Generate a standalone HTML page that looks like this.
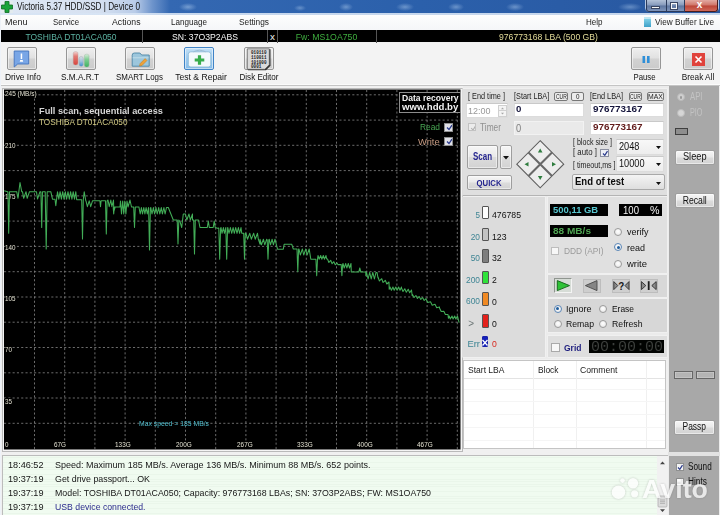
<!DOCTYPE html>
<html><head><meta charset="utf-8"><title>Victoria 5.37 HDD/SSD | Device 0</title>
<style>
*{box-sizing:border-box;margin:0;padding:0}
html,body{width:720px;height:515px;overflow:hidden;background:#f0f0f0}
body{position:relative;font-family:"Liberation Sans",sans-serif;font-size:9.5px;color:#1a1a1a}
.a{position:absolute;white-space:nowrap}
.t{position:absolute;white-space:nowrap;line-height:12px;height:12px}
/* title */
#title{left:0;top:0;width:720px;height:15px;background:
radial-gradient(ellipse 9px 4px at 188px 7px,rgba(170,200,235,.55),transparent),
radial-gradient(ellipse 6px 3px at 300px 8px,rgba(170,200,235,.45),transparent),
radial-gradient(ellipse 7px 4px at 346px 7px,rgba(170,200,235,.5),transparent),
radial-gradient(ellipse 9px 4px at 405px 7px,rgba(170,200,235,.5),transparent),
radial-gradient(ellipse 8px 4px at 456px 7px,rgba(170,200,235,.5),transparent),
radial-gradient(ellipse 9px 4px at 515px 7px,rgba(170,200,235,.5),transparent),
radial-gradient(ellipse 12px 4px at 630px 7px,rgba(170,200,235,.45),transparent),
linear-gradient(rgba(255,255,255,0) 0,rgba(255,255,255,0) 13px,rgba(215,228,244,.9) 13.5px,rgba(215,228,244,.9) 15px),
linear-gradient(90deg,#dfe8f5 0px,#d5e0f0 100px,#b9cce8 135px,#6f95cc 152px,#3468b2 170px,#2b60ab 420px,#2a5ca6 560px,#28579f 720px);}
#menu{left:0;top:15px;width:720px;height:15.500px;background:linear-gradient(#fdfdfd,#f4f5f8)}
#info{left:0;top:30.300px;width:720px;height:12.200px;background:#000}
#tool{left:0;top:43px;width:720px;height:42.500px;background:#f3f3f3;border-bottom:1px solid #c4c4c4;box-shadow:inset 0 -1px 0 #fafafa}
.tb{position:absolute;top:47px;height:23px;width:30px;border:1px solid #969696;border-radius:2px;background:linear-gradient(#efefef,#e1e1e1 48%,#d2d2d2 52%,#cbcbcb);box-shadow:inset 0 0 0 0.600px #fafafa}
.tl{position:absolute;top:71px;height:12px;line-height:12px;font-size:9.8px;text-align:center;white-space:nowrap;color:#111}
.m{font-size:9.7px;color:#1c1c1c}
.i{font-size:9.8px;line-height:13px;height:13px}
.g{font-size:7.4px;line-height:8px;height:8px;margin-top:1.2px;color:#e4e2d2;background:#000;z-index:1}
.cb{position:absolute;width:9px;height:9px;background:#f4f4f4;border:0.5px solid #8e8f8f;overflow:hidden}
.cb svg{position:absolute;left:-0.5px;top:-0.5px}

.pn{position:absolute;background:#dfdfdf;box-shadow:0 0 0 0.6px #f3f3f3}
.in{position:absolute;background:#fff;border:1px solid #dcdcdc;border-top-color:#c9c9c9}
.bt{position:absolute;border:1px solid #9e9e9e;border-radius:2px;background:linear-gradient(#f6f6f6,#e9e9e9 48%,#dcdcdc 52%,#d2d2d2);box-shadow:inset 0 0 0 0.5px #fff}
.sb{position:absolute;border:0.8px solid #777;border-radius:2px;background:#ececec}
.rd{position:absolute;width:8px;height:8px;border-radius:50%;border:0.8px solid #9a9a9a;background:radial-gradient(circle at 50% 40%,#fff,#e4e4e4)}
.rd.on::after{content:"";position:absolute;left:1.7px;top:1.7px;width:3px;height:3px;border-radius:50%;background:#1e5c9c}
.lb{font-size:8.2px;color:#222}
.lg{position:absolute;width:7.5px;height:13.5px;border:1px solid #555;border-radius:1px}
.lt{font-size:9.8px;color:#3f8594;text-align:right;width:20px}
.lc{font-size:9.3px;color:#111}
.r12{font-size:9.8px;color:#111}
.lgx{font-size:9.800px;color:#161616}
</style></head><body>
<div id="title" class="a"></div>
<div id="menu" class="a"></div>
<div id="info" class="a"></div>
<div id="tool" class="a"></div>

<!-- title content -->
<svg class="a" style="left:1px;top:1px" width="12" height="12" viewBox="0 0 12 12"><rect x="0" y="0" width="12" height="12" fill="#e8f0e8" opacity="0.5"/><path d="M4 0.5h4v3.5h3.5v4h-3.5v3.5h-4v-3.5h-3.5v-4h3.5z" fill="#19a43a" stroke="#0c6a22" stroke-width="0.8"/></svg>
<div class="t" id="ttl" style="transform:scaleX(0.819);transform-origin:0 0;left:17px;top:1px;font-size:10px;color:#111">Victoria 5.37 HDD/SSD | Device 0</div>
<!-- window buttons -->
<div class="a" style="left:644.500px;top:-1px;width:74.500px;height:13px;border:1px solid rgba(225,235,248,.75);border-radius:0 0 4px 4px"></div>
<div class="a" style="left:645.500px;top:0;width:21.500px;height:11.500px;border:0.800px solid #2b3b5c;border-top:none;border-radius:0 0 0 3px;background:linear-gradient(#b3c1d7,#8599bb 48%,#5d759f 52%,#7e94ba)"></div>
<div class="a" style="left:667px;top:0;width:18px;height:11.500px;border:0.800px solid #2b3b5c;border-top:none;border-left:none;background:linear-gradient(#b3c1d7,#8599bb 48%,#5d759f 52%,#7e94ba)"></div>
<div class="a" style="left:685px;top:0;width:33px;height:11.500px;border:0.800px solid #4a1d1d;border-top:none;border-left:none;border-radius:0 0 3px 0;background:linear-gradient(#e2aaa2,#cf7468 48%,#bb4436 52%,#d0695a)"></div>
<div class="a" style="left:651px;top:6px;width:9px;height:2.600px;background:#f6f6f6;border:0.500px solid #3b4662"></div>
<div class="a" style="left:670.500px;top:3px;width:6.500px;height:6px;border:1.400px solid #f6f6f6;outline:0.500px solid #3b4662"></div>
<div class="t" style="left:696.800px;top:-1.300px;font-size:10px;font-weight:bold;color:#fff">x</div>
<!-- menu -->
<div class="t m" style="transform:scaleX(0.928);transform-origin:0 0;left:4.800px;top:16px">Menu</div>
<div class="t m" style="transform:scaleX(0.805);transform-origin:0 0;left:53px;top:16px">Service</div>
<div class="t m" style="transform:scaleX(0.897);transform-origin:0 0;left:112px;top:16px">Actions</div>
<div class="t m" style="transform:scaleX(0.835);transform-origin:0 0;left:171px;top:16px">Language</div>
<div class="t m" style="transform:scaleX(0.857);transform-origin:0 0;left:239px;top:16px">Settings</div>
<div class="t m" style="transform:scaleX(0.828);transform-origin:0 0;left:586px;top:16px">Help</div>
<div class="a" style="left:644px;top:17px;width:7px;height:10px;background:linear-gradient(#7fd0e8,#3ea0c8);border-top:2px solid #bfe8f4"></div>
<div class="t m" style="transform:scaleX(0.847);transform-origin:0 0;left:655px;top:16px">View Buffer Live</div>
<!-- info bar -->
<div class="t i" style="transform:scaleX(0.863);transform-origin:50% 0;left:0;top:30px;width:142px;text-align:center;color:#5cb3a3">TOSHIBA DT01ACA050</div>
<div class="a" style="left:142px;top:30px;width:1px;height:13px;background:#555"></div>
<div class="t i" style="transform:scaleX(0.885);transform-origin:50% 0;left:143px;top:30px;width:124px;text-align:center;color:#f4f4f4">SN: 37O3P2ABS</div>
<div class="a" style="left:267px;top:30px;width:1px;height:13px;background:#555"></div>
<div class="t i" style="left:268px;top:30px;width:9px;text-align:center;color:#f4f4f4">x</div>
<div class="a" style="left:277px;top:30px;width:1px;height:13px;background:#555"></div>
<div class="t i" style="transform:scaleX(0.889);transform-origin:50% 0;left:278px;top:30px;width:97px;text-align:center;color:#3fae3f">Fw: MS1OA750</div>
<div class="a" style="left:376px;top:30px;width:1px;height:13px;background:#555"></div>
<div class="t i" style="transform:scaleX(0.882);transform-origin:50% 0;left:377px;top:30px;width:343px;text-align:center;color:#e3dc9a">976773168 LBA (500 GB)</div>

<!-- toolbar -->
<div class="tb" style="left:7px"></div>
<div class="tb" style="left:66px"></div>
<div class="tb" style="left:125px"></div>
<div class="tb" style="left:184px;border-color:#3f83c6;background:linear-gradient(#c3e0f6,#9ccbf0 50%,#86bdea)"></div>
<div class="tb" style="left:244px"></div>
<div class="tb" style="left:631px"></div>
<div class="tb" style="left:683px"></div>
<svg class="a" style="left:0;top:43px" width="720" height="43" viewBox="0 43 720 43">
 <!-- drive info -->
 <path d="M14.200 51h14.500v13h-11l-3.500 3z" fill="#79a6e6" stroke="#4474bd" stroke-width="0.900"/>
 <rect x="20.700" y="53.500" width="1.500" height="5.500" fill="#fff"/><path d="M20.200 60h2.500l0.500 1.800h-3.500z" fill="#fff"/>
 <!-- smart -->
 <defs><linearGradient id="gr" x1="0" y1="0" x2="0" y2="1"><stop offset="0" stop-color="#f3d4d2"/><stop offset="0.350" stop-color="#e27a74"/><stop offset="1" stop-color="#d8453e"/></linearGradient>
 <linearGradient id="gb" x1="0" y1="0" x2="0" y2="1"><stop offset="0" stop-color="#d9dde2"/><stop offset="0.500" stop-color="#9fc0dc"/><stop offset="1" stop-color="#3f8fd0"/></linearGradient>
 <linearGradient id="gg" x1="0" y1="0" x2="0" y2="1"><stop offset="0" stop-color="#d6ecd9"/><stop offset="0.400" stop-color="#7fcf93"/><stop offset="1" stop-color="#3fb160"/></linearGradient></defs>
 <rect x="73.200" y="51.600" width="4.800" height="13.400" rx="2" fill="url(#gr)" stroke="#b9a3a3" stroke-width="0.400"/><rect x="79.200" y="56.500" width="4" height="9.800" rx="1.800" fill="url(#gb)" stroke="#9aa5b0" stroke-width="0.400"/><rect x="84.300" y="54.200" width="4.800" height="12.800" rx="2" fill="url(#gg)" stroke="#9db5a2" stroke-width="0.400"/>
 <!-- smart logs -->
 <path d="M132.200 55.200q0-2.200 2.200-2.200h5.500l1.800 2h7.500v11.200h-17z" fill="#9cc6dc" stroke="#4d86a6" stroke-width="0.900"/><path d="M132.600 57.800h16" stroke="#c9e2ee" stroke-width="0.800"/>
 <path d="M139.500 66l0.600-2.400 5-5 1.900 1.900-5 5z" fill="#eda23a" stroke="#c07a1c" stroke-width="0.500"/>
 <!-- test & repair -->
 <rect x="188.300" y="51.800" width="22.500" height="15.200" rx="2.500" fill="#f3f9fc" stroke="#8fbbd8" stroke-width="0.900"/>
 <path d="M193.500 51.800q6-3.200 12 0" fill="none" stroke="#9bbdd4" stroke-width="1"/>
 <path d="M197.900 55.200h3.200v3.200h3.200v3.200h-3.200v3.200h-3.200v-3.200h-3.200v-3.200h3.200z" fill="#37ad4c"/>
 <!-- disk editor -->
 <path d="M248 49.300h22.500v16.500l-4.500 4.500h-18z" fill="#303030"/>
 <path d="M247.300 48.800h22v16l-4.500 4.500h-17.500z" fill="#dadada" stroke="#555" stroke-width="0.700"/>
 <g font-family="Liberation Mono,monospace" font-size="5.200" fill="#1a1a1a" font-weight="bold"><text x="251" y="54.200" textLength="15.500" lengthAdjust="spacingAndGlyphs">010110</text><text x="251" y="58.900" textLength="15.500" lengthAdjust="spacingAndGlyphs">110011</text><text x="251" y="63.600" textLength="15.500" lengthAdjust="spacingAndGlyphs">101000</text><text x="251" y="68.200" textLength="10.300" lengthAdjust="spacingAndGlyphs">0001</text></g>
 <!-- pause -->
 <rect x="642.500" y="56" width="2.600" height="7" fill="#2f8fd8"/><rect x="647" y="56" width="2.600" height="7" fill="#2f8fd8"/>
 <!-- break all -->
 <rect x="692" y="53" width="13" height="13" fill="#e0433c"/>
 <path d="M695.500 56.500l6 6m0-6l-6 6" stroke="#fff" stroke-width="1.600" fill="none"/>
</svg>
<div class="tl" style="transform:scaleX(0.858);transform-origin:50% 0;left:2px;width:41px">Drive Info</div>
<div class="tl" style="transform:scaleX(0.841);transform-origin:50% 0;left:55px;width:50px">S.M.A.R.T</div>
<div class="tl" style="transform:scaleX(0.812);transform-origin:50% 0;left:109px;width:61px">SMART Logs</div>
<div class="tl" style="transform:scaleX(0.876);transform-origin:50% 0;left:171px;width:60px">Test &amp; Repair</div>
<div class="tl" style="transform:scaleX(0.823);transform-origin:50% 0;left:234px;width:50px">Disk Editor</div>
<div class="tl" style="transform:scaleX(0.792);transform-origin:50% 0;left:624px;width:41px">Pause</div>
<div class="tl" style="transform:scaleX(0.840);transform-origin:50% 0;left:673px;width:50px">Break All</div>
<div class="a" style="left:0;top:15px;width:1px;height:500px;background:#eef2f8"></div>
<!-- graph -->
<div class="a" style="left:1.500px;top:87.500px;width:461px;height:364.500px;background:#f4f4f4;border:1px solid #b9b9b9"></div>
<svg class="a" style="left:0;top:0;z-index:0" width="720" height="515" viewBox="0 0 720 515">
<rect x="4" y="89.5" width="456.5" height="360" fill="#000"/>
<g stroke="#7e7e7e" stroke-width="0.85" stroke-dasharray="2.1 2.2" fill="none"><line x1="34.5" y1="90" x2="34.5" y2="449.5"/><line x1="64.7" y1="90" x2="64.7" y2="449.5"/><line x1="94.9" y1="90" x2="94.9" y2="449.5"/><line x1="125.1" y1="90" x2="125.1" y2="449.5"/><line x1="155.3" y1="90" x2="155.3" y2="449.5"/><line x1="185.5" y1="90" x2="185.5" y2="449.5"/><line x1="215.7" y1="90" x2="215.7" y2="449.5"/><line x1="245.9" y1="90" x2="245.9" y2="449.5"/><line x1="276.1" y1="90" x2="276.1" y2="449.5"/><line x1="306.3" y1="90" x2="306.3" y2="449.5"/><line x1="336.5" y1="90" x2="336.5" y2="449.5"/><line x1="366.7" y1="90" x2="366.7" y2="449.5"/><line x1="396.9" y1="90" x2="396.9" y2="449.5"/><line x1="427.1" y1="90" x2="427.1" y2="449.5"/><line x1="457.3" y1="90" x2="457.3" y2="449.5"/><line x1="4" y1="94.8" x2="460.5" y2="94.8"/><line x1="4" y1="120.1" x2="460.5" y2="120.1"/><line x1="4" y1="145.3" x2="460.5" y2="145.3"/><line x1="4" y1="170.6" x2="460.5" y2="170.6"/><line x1="4" y1="195.9" x2="460.5" y2="195.9"/><line x1="4" y1="221.1" x2="460.5" y2="221.1"/><line x1="4" y1="246.4" x2="460.5" y2="246.4"/><line x1="4" y1="271.7" x2="460.5" y2="271.7"/><line x1="4" y1="297.0" x2="460.5" y2="297.0"/><line x1="4" y1="322.2" x2="460.5" y2="322.2"/><line x1="4" y1="347.5" x2="460.5" y2="347.5"/><line x1="4" y1="372.8" x2="460.5" y2="372.8"/><line x1="4" y1="398.0" x2="460.5" y2="398.0"/><line x1="4" y1="423.3" x2="460.5" y2="423.3"/></g>
</svg>
<svg class="a" style="left:0;top:0;z-index:2;pointer-events:none" width="720" height="515" viewBox="0 0 720 515">
<polyline points="4.2,190.8 7.5,191.7 7.9,191.7 8.7,233.3 9.5,191.7 10.3,191.7 16.7,191.7 18,198.3 20,182.5 21.7,191.7 22.5,191.7 23.7,198.3 26.0,191.7 27.2,198.3 29.5,191.7 29.5,191.7 36.5,191.7 36.5,191.7 37.5,199.0 40,191.7 40.9,191.7 41.7,227.5 42.5,191.7 44,191.7 45.2,191.7 46.2,249 47.2,191.7 48.3,191.7 50.8,191.7 52.5,199.2 55,199.2 55.8,205.8 57.5,191.7 57.5,191.7 58.8,199.2 60.1,191.7 61.4,199.2 62.7,191.7 64.0,199.2 65.3,191.7 66.6,199.2 68.0,191.7 69.3,199.2 70.6,191.7 71.9,199.2 73.2,191.7 74.5,199.2 75.8,191.7 76.7,199.7 81.7,199.7 81.7,199.7 82.5,239 83.3,199.7 84.2,191.7 85.8,200.8 86.0,200.8 87.4,206.7 89.2,200.8 90.7,206.7 92.5,200.8 92.5,200.8 99.8,200.8 99.9,200.8 100.5,206.7 101.1,200.8 101.3,200.8 105.3,200.8 105.5,200.8 106.3,234 107.1,200.8 108.0,200.0 109.2,206.7 110.8,200.0 111.9,206.7 113.5,200 113.8,211.7 115,207.5 113.2,207.5 113.7,214 114.2,207.5 114.5,207 120,207 120.5,201.0 121.5,214.0 122.7,201.0 123.7,214.0 124.8,201.0 125.9,214.0 127,201 128,207 130,200 131.5,207 133.7,207 134.5,227.5 135.3,207 135.8,207 139,207 139.0,207.5 140.2,214.0 141.4,207.5 142.5,214.0 143.8,207.5 144.9,214.0 146.1,207.5 147.3,214.0 148.5,207.5 148.6,208 149.5,250 150.4,208 150.8,207.5 152.0,214.0 153.4,207.5 154.6,214.0 156.0,207.5 157.2,214.0 158.7,207.5 159.8,214.0 161.3,207.5 162.4,214.0 163.9,207.5 165.1,214.0 166.5,207.5 168.3,207.5 173.3,220 173.3,220 176.8,220 177.2,220 178,244 178.8,220 180,221.5 181.7,227.5 183.3,214 185.5,214.0 186.8,220.0 189.0,214.0 190.3,220.0 192.5,214 192.5,220 193.5,220 193.7,220 194.5,254 195.3,220 195.8,220 198.5,220 200,227.5 200,227.5 207.3,227.5 208.3,221 209.3,227.5 209.3,227.5 213.2,227.5 214.2,221 215.2,227.5 217.5,228.3 218.8,228 219.7,259.2 220.6,228 221.0,227.5 222.0,233.3 223.4,227.5 224.4,233.3 225.8,227.5 225.8,228 226.7,259.2 227.6,228 227.8,227.5 229.0,233.3 230.4,227.5 231.7,233.3 233.1,227.5 234.3,233.3 235.7,227.5 237.0,233.3 238.4,227.5 239.6,233.3 241,227.5 241.7,233.3 243.5,233.3 243.7,233.3 244.5,259.2 245.3,233.3 246.0,233.3 247.5,239.2 249.8,233.3 251.3,239.2 253.7,233.3 255.2,239.2 257.5,233.3 258.3,239.2 260,244.2 260.0,239.2 261.4,244.8 263.4,239.2 264.8,244.8 266.7,239.2 267.2,240 268,259.2 268.8,240 269.2,239.2 270.5,244.8 272.1,239.2 273.4,244.8 275,239.2 277.5,249.2 277.5,249.2 283.3,249.2 284.2,244.2 284.2,244.2 291.7,244.2 293.3,249 293.3,249 296.7,249 297.0,249 297.8,271.7 298.6,249 299.0,249.0 300.3,255.0 302.4,249.0 303.7,255.0 305.8,249.0 307.1,255.0 309.2,249 310.8,259.2 310.8,259.2 315.5,259.2 315.9,259.2 316.7,275.8 317.5,259.2 318.0,255.5 319.1,259.2 320.7,255.5 321.8,259.2 323.3,255.5 324.4,259.2 326,255.5 326.7,259 327.5,259.0 328.9,262.5 330.7,260.3 332.1,263.7 333.8,261.7 335.3,264.8 337,263 337.9,264.6 341,264.6 341.2,264.6 341.9,275.8 342.6,264.6 343.0,263.5 344.2,268.0 345.7,263.5 346.8,268.0 348.3,263.5 349.5,268.0 351,263.5 351.3,272 351.3,272 358.8,272 359.8,268 360.8,272 360.8,272 365.8,272 365.8,275.8 366.5,272.4 368.1,279.0 369.7,272.4 371.2,279.0 372.8,272.4 374.4,279.0 376,272.4 377,272.4 378,278 378.0,277.0 379.4,281.0 381.7,278.7 383.1,282.5 385.3,280.3 386.8,284.0 389,282 389.2,289.2 390.0,287.0 391.4,290.3 392.9,287.0 394.2,290.3 395.8,287.0 397.1,290.3 398.6,287.0 400.0,290.3 401.5,287 401.5,288.0 403.0,291.5 404.8,288.7 406.3,292.2 408.2,289.3 409.7,292.8 411.5,290 412.2,295.8 412.5,294.5 414.1,297.5 415.9,295.5 417.4,298.5 419.2,296.5 420.8,299.5 422.6,297.5 424.2,300.5 426,298.5 426.0,299.0 427.7,302.5 430.5,301.7 432.2,305.2 435.0,304.3 436.7,307.8 439.5,307 439.5,308.0 441.2,311.5 443.8,311.2 445.4,314.5 448,314.5 448.4,318.2 449.2,316.0 450.3,319.0 452.0,316.0 453.1,319.0 454.7,316.0 455.8,319.0 457.5,316 459.1,322.6" fill="none" stroke="#42ad57" stroke-width="1.05" stroke-linejoin="round"/>
</svg>

<!-- graph labels -->
<div class="t g" style="transform:scaleX(0.874);transform-origin:0 0;left:4.5px;top:89.3px">245 (MB/s)</div>
<div class="t g" style="transform:scaleX(0.851);transform-origin:0 0;left:4.5px;top:140.5px">210</div>
<div class="t g" style="transform:scaleX(0.851);transform-origin:0 0;left:4.5px;top:191.7px">175</div>
<div class="t g" style="transform:scaleX(0.851);transform-origin:0 0;left:4.5px;top:242.9px">140</div>
<div class="t g" style="transform:scaleX(0.851);transform-origin:0 0;left:4.5px;top:294.1px">105</div>
<div class="t g" style="transform:scaleX(0.850);transform-origin:0 0;left:4.5px;top:345.3px">70</div>
<div class="t g" style="transform:scaleX(0.850);transform-origin:0 0;left:4.5px;top:396.5px">35</div>
<div class="t g" style="transform:scaleX(0.848);transform-origin:0 0;left:4.5px;top:440px">0</div>
<div class="t g" style="transform:scaleX(0.858);transform-origin:0 0;left:54px;top:440px">67G</div>
<div class="t g" style="transform:scaleX(0.868);transform-origin:0 0;left:115px;top:440px">133G</div>
<div class="t g" style="transform:scaleX(0.868);transform-origin:0 0;left:176px;top:440px">200G</div>
<div class="t g" style="transform:scaleX(0.868);transform-origin:0 0;left:236.7px;top:440px">267G</div>
<div class="t g" style="transform:scaleX(0.868);transform-origin:0 0;left:296.7px;top:440px">333G</div>
<div class="t g" style="transform:scaleX(0.868);transform-origin:0 0;left:356.7px;top:440px">400G</div>
<div class="t g" style="transform:scaleX(0.868);transform-origin:0 0;left:416.7px;top:440px">467G</div>
<div class="t" style="transform:scaleX(0.970);transform-origin:0 0;left:39.4px;top:104.5px;font-size:9.5px;font-weight:bold;color:#d6d6d6">Full scan, sequential access</div>
<div class="t" style="transform:scaleX(0.865);transform-origin:0 0;left:39.4px;top:116px;font-size:9.5px;color:#d3cb86">TOSHIBA DT01ACA050</div>
<div class="t" style="transform:scaleX(0.975);transform-origin:0 0;left:139.3px;top:419.3px;font-size:7px;line-height:10px;height:10px;color:#4fbccc">Max speed = 185 MB/s</div>
<div class="a" style="left:399px;top:91.5px;width:61.5px;height:21.5px;border:1px solid #8c8c8c;background:#000"></div>
<div class="t" style="transform:scaleX(0.900);transform-origin:0 0;left:401.7px;top:91.8px;font-size:9.5px;line-height:11px;height:11px;font-weight:bold;color:#f2f2f2">Data recovery</div>
<div class="t" style="transform:scaleX(1.013);transform-origin:0 0;left:401.7px;top:101.2px;font-size:9.5px;line-height:11px;height:11px;font-weight:bold;color:#f2f2f2">www.hdd.by</div>
<div class="t" style="transform:scaleX(0.880);transform-origin:0 0;left:420px;top:121.3px;font-size:9.5px;color:#48a653">Read</div>
<div class="t" style="transform:scaleX(0.986);transform-origin:0 0;left:418.3px;top:135.7px;font-size:9.5px;color:#c59a82">Write</div>
<div class="cb" style="left:444px;top:122.7px;background:#dfe0e6"><svg width="9" height="9" viewBox="0 0 9 9"><path d="M2 4.500l2 2 3-4.500" fill="none" stroke="#2a3a8c" stroke-width="1.300"/></svg></div>
<div class="cb" style="left:444px;top:136.700px;background:#dfe0e6"><svg width="9" height="9" viewBox="0 0 9 9"><path d="M2 4.500l2 2 3-4.500" fill="none" stroke="#2a3a8c" stroke-width="1.300"/></svg></div>

<!-- right control area -->
<div class="a" style="left:462.500px;top:86px;width:207px;height:273px;background:#ebebeb"></div>
<div class="pn" style="left:462.500px;top:89px;width:204px;height:105.500px"></div>
<div class="a" style="left:462.500px;top:195.200px;width:204px;height:1px;background:#b4b4b4"></div>
<div class="pn" style="left:462.500px;top:197px;width:82.800px;height:159.800px;background:#dcdcdc"></div>
<div class="pn" style="left:548px;top:197px;width:118.500px;height:76px;background:#e0e0e0"></div>
<div class="pn" style="left:548px;top:275px;width:118.500px;height:21.500px;background:#d8d8d8"></div>
<div class="pn" style="left:548px;top:299px;width:118.500px;height:33px;background:#d7d7d7"></div>
<div class="pn" style="left:548px;top:335.500px;width:118.500px;height:21.500px;background:#dedede"></div>
<!-- top panel content -->
<div class="t lb" style="transform:scaleX(0.893);transform-origin:0 0;left:468px;top:90.600px">[ End time ]</div>
<div class="t lb" style="transform:scaleX(0.889);transform-origin:0 0;left:513.800px;top:90.600px">[Start LBA]</div>
<div class="t lb" style="transform:scaleX(0.895);transform-origin:0 0;left:589.700px;top:90.600px">[End LBA]</div>
<div class="sb" style="left:554px;top:92px;width:13.500px;height:8.500px"></div><div class="t" style="transform:scaleX(0.733);transform-origin:0 0;left:555.500px;top:91px;font-size:6.800px;color:#222">CUR</div>
<div class="sb" style="left:570.500px;top:92px;width:13px;height:8.500px"></div><div class="t" style="transform:scaleX(0.896);transform-origin:0 0;left:575.500px;top:91px;font-size:7px;color:#222">0</div>
<div class="sb" style="left:628.500px;top:92px;width:13.500px;height:8.500px"></div><div class="t" style="transform:scaleX(0.733);transform-origin:0 0;left:630px;top:91px;font-size:6.800px;color:#222">CUR</div>
<div class="sb" style="left:646.500px;top:92px;width:17.500px;height:8.500px"></div><div class="t" style="transform:scaleX(1.004);transform-origin:0 0;left:648px;top:91px;font-size:6.800px;color:#222">MAX</div>
<div class="in" style="left:466.300px;top:103px;width:41.500px;height:15px"></div>
<div class="t" style="transform:scaleX(0.937);transform-origin:0 0;left:468px;top:105px;font-size:9.600px;color:#989898">12:00</div>
<div class="a" style="left:497.500px;top:104.500px;width:9px;height:12px;border:0.6px solid #d0d0d0;background:#f4f4f4"></div>
<div class="a" style="left:497.500px;top:110.300px;width:9px;height:0.600px;background:#d0d0d0"></div>
<svg class="a" style="left:497.500px;top:104.500px" width="9" height="12" viewBox="0 0 9 12"><path d="M3 4.200l1.500-1.800 1.500 1.800zM3 7.800l1.500 1.800 1.500-1.800z" fill="#a8a8a8"/></svg>
<div class="in" style="left:513.800px;top:102.700px;width:70.500px;height:14.800px"></div>
<div class="t" style="transform:scaleX(0.990);transform-origin:0 0;left:516px;top:103.300px;font-size:9.800px;font-weight:bold;color:#15153c">0</div>
<div class="in" style="left:590.300px;top:102.700px;width:74.200px;height:14.800px"></div>
<div class="t" style="transform:scaleX(1.011);transform-origin:0 0;left:592.600px;top:103.300px;font-size:9.800px;font-weight:bold;color:#15153c">976773167</div>
<div class="cb" style="left:468px;top:123.300px;width:8px;height:8px;background:#ececec;border-color:#c2c2c2"><svg width="9" height="9" viewBox="0 0 9 9"><path d="M2.200 4l1.800 2 2.700-4.200" fill="none" stroke="#b0b0b0" stroke-width="1.100"/></svg></div>
<div class="t" style="transform:scaleX(0.834);transform-origin:0 0;left:480px;top:121.500px;font-size:10px;color:#8f8f8f">Timer</div>
<div class="in" style="left:514px;top:121px;width:70px;height:14px;background:#eaeaea;border-color:#f2f2f2"></div>
<div class="t" style="transform:scaleX(0.890);transform-origin:0 0;left:516px;top:122px;font-size:10.500px;color:#7f7f7f">0</div>
<div class="in" style="left:590.300px;top:120.700px;width:74.200px;height:14.400px"></div>
<div class="t" style="transform:scaleX(1.011);transform-origin:0 0;left:592.600px;top:120.900px;font-size:9.800px;font-weight:bold;color:#611a1a">976773167</div>
<!-- scan buttons -->
<div class="bt" style="left:467.400px;top:144.600px;width:31px;height:24.500px"></div>
<div class="t" style="transform:scaleX(0.795);transform-origin:50% 0;left:467.400px;top:150.800px;width:31px;text-align:center;font-size:10px;font-weight:bold;color:#26268f">Scan</div>
<div class="bt" style="left:500px;top:144.600px;width:11.600px;height:24.500px"></div>
<svg class="a" style="left:502.800px;top:155.500px" width="6" height="4" viewBox="0 0 6 4"><path d="M0 0h6l-3 3.600z" fill="#111"/></svg>
<div class="bt" style="left:467.400px;top:174.700px;width:44.200px;height:15.500px"></div>
<div class="t" style="transform:scaleX(0.882);transform-origin:50% 0;left:467.400px;top:176.500px;width:44.200px;text-align:center;font-size:8.800px;font-weight:bold;color:#26268f">QUICK</div>
<!-- diamond -->
<svg class="a" style="left:514px;top:138px" width="54" height="54" viewBox="514 138 54 54">
<path d="M540.200 140.700L563.700 164.200 540.200 187.800 516.800 164.200z" fill="#ededed" stroke="#5e5e5e" stroke-width="1.100"/>
<path d="M528.500 152.500L552 176M552 152.500L528.500 176" stroke="#686868" stroke-width="2.100" fill="none"/>
<path d="M540.200 148.500l2.300 4h-4.600zM540.200 180l2.300-4h-4.600zM524.500 164.200l4-2.300v4.600zM556 164.200l-4-2.300v4.600z" fill="#2f7d3f"/>
</svg>
<!-- block size etc -->
<div class="t lb" style="transform:scaleX(0.865);transform-origin:0 0;left:572.800px;top:137.300px">[ block size ]</div>
<div class="t lb" style="transform:scaleX(0.958);transform-origin:0 0;left:572.800px;top:147.100px">[ auto ]</div>
<div class="cb" style="left:600.300px;top:148.500px;width:8.700px;height:8.700px;background:#eef0f6;border-color:#8a8fa0"><svg width="9" height="9" viewBox="0 0 9 9"><path d="M2 4.500l1.800 1.800 2.700-4.200" fill="none" stroke="#2a3a8c" stroke-width="1.200"/></svg></div>
<div class="t lb" style="transform:scaleX(0.865);transform-origin:0 0;left:572.800px;top:160px">[ timeout,ms ]</div>
<div class="in" style="left:616px;top:139.400px;width:48.200px;height:15.500px;background:linear-gradient(#f8f8f8,#ededed)"></div>
<div class="t" style="transform:scaleX(0.921);transform-origin:0 0;left:619px;top:140.800px;font-size:10px;color:#111">2048</div>
<svg class="a" style="left:655.500px;top:145.500px" width="5" height="3.500" viewBox="0 0 6 4"><path d="M0 0h6l-3 3.600z" fill="#111"/></svg>
<div class="in" style="left:616px;top:156.400px;width:48.200px;height:15.800px;background:linear-gradient(#f8f8f8,#ededed)"></div>
<div class="t" style="transform:scaleX(0.917);transform-origin:0 0;left:619px;top:158px;font-size:10px;color:#111">10000</div>
<svg class="a" style="left:655.500px;top:162.500px" width="5" height="3.500" viewBox="0 0 6 4"><path d="M0 0h6l-3 3.600z" fill="#111"/></svg>
<div class="in" style="left:571.500px;top:174.300px;width:93px;height:16.200px;border-color:#a9a9a9;border-radius:2px;background:linear-gradient(#f4f4f4,#e9e9e9 50%,#dedede)"></div>
<div class="t" style="transform:scaleX(0.954);transform-origin:0 0;left:574.500px;top:176.400px;font-size:10px;font-weight:bold;color:#0c0c0c">End of test</div>
<svg class="a" style="left:655.500px;top:181.500px" width="5" height="3.500" viewBox="0 0 6 4"><path d="M0 0h6l-3 3.600z" fill="#111"/></svg>

<!-- legend -->
<div class="t lt" style="transform:scaleX(0.825);transform-origin:100% 0;left:460.3px;top:208.6px">5</div><div class="lg" style="left:481.7px;top:205.6px;background:#fdfdfd"></div><div class="t lc" style="transform:scaleX(0.935);transform-origin:0 0;left:491.7px;top:208.8px;color:#111">476785</div>
<div class="t lt" style="transform:scaleX(0.853);transform-origin:100% 0;left:460.3px;top:230.8px">20</div><div class="lg" style="left:481.7px;top:227.8px;background:#c2c2c2"></div><div class="t lc" style="transform:scaleX(0.935);transform-origin:0 0;left:491.7px;top:231.0px;color:#111">123</div>
<div class="t lt" style="transform:scaleX(0.853);transform-origin:100% 0;left:460.3px;top:252.1px">50</div><div class="lg" style="left:481.7px;top:249.1px;background:#7e7e7e"></div><div class="t lc" style="transform:scaleX(0.938);transform-origin:0 0;left:491.7px;top:252.3px;color:#111">32</div>
<div class="t lt" style="transform:scaleX(0.856);transform-origin:100% 0;left:460.3px;top:273.8px">200</div><div class="lg" style="left:481.7px;top:270.8px;background:#2fe23a"></div><div class="t lc" style="transform:scaleX(0.928);transform-origin:0 0;left:491.7px;top:274.0px;color:#111">2</div>
<div class="t lt" style="transform:scaleX(0.856);transform-origin:100% 0;left:460.3px;top:295.3px">600</div><div class="lg" style="left:481.7px;top:292.3px;background:#f08a24"></div><div class="t lc" style="transform:scaleX(0.928);transform-origin:0 0;left:491.7px;top:295.5px;color:#111">0</div>
<div class="t lt" style="transform:scaleX(0.945);transform-origin:100% 0;left:453.800px;top:317.400px;color:#6c7676;font-size:10.500px">&gt;</div><div class="lg" style="left:481.7px;top:314.4px;background:#e3211c"></div><div class="t lc" style="transform:scaleX(0.928);transform-origin:0 0;left:491.7px;top:317.6px;color:#111">0</div>
<div class="t lt" style="transform:scaleX(0.957);transform-origin:100% 0;left:460.3px;top:337.8px">Err</div><div class="lg" style="left:481.700px;top:335.500px;height:11.800px;width:6.800px;border-color:#1a22a8;background:#1320bb"></div><div class="t lc" style="transform:scaleX(0.928);transform-origin:0 0;left:491.7px;top:338.0px;color:#d8281e">0</div>
<svg class="a" style="left:482.100px;top:337.300px" width="6" height="11" viewBox="0 0 6 11"><path d="M0.500 3l5 5.500M5.500 3l-5 5.500" stroke="#fff" stroke-width="1.300"/></svg>
<!-- status sub panel -->
<div class="a" style="left:550px;top:204px;width:58.200px;height:12px;background:#000"></div>
<div class="t" style="transform:scaleX(0.965);transform-origin:0 0;left:552.600px;top:204px;font-size:9.800px;font-weight:bold;color:#57c6cf">500,11 GB</div>
<div class="a" style="left:619px;top:204px;width:43px;height:12px;background:#000"></div>
<div class="t" style="transform:scaleX(0.913);transform-origin:0 0;left:622.500px;top:204px;font-size:10.500px;color:#f4f4f4">100</div>
<div class="t" style="transform:scaleX(1.017);transform-origin:0 0;left:650px;top:204px;font-size:10.500px;color:#f4f4f4">%</div>
<div class="a" style="left:550px;top:225.200px;width:58.200px;height:12px;background:#000"></div>
<div class="t" style="transform:scaleX(1.026);transform-origin:0 0;left:552.600px;top:225.200px;font-size:9.800px;font-weight:bold;color:#4fa452">88 MB/s</div>
<div class="rd" style="left:614.200px;top:227.500px"></div><div class="t r12" style="transform:scaleX(0.918);transform-origin:0 0;left:626.600px;top:225.700px">verify</div>
<div class="rd on" style="left:614.200px;top:243.400px;border-color:#5b87b8"></div><div class="t r12" style="transform:scaleX(0.918);transform-origin:0 0;left:626.600px;top:241.500px">read</div>
<div class="rd" style="left:614.200px;top:259.600px"></div><div class="t r12" style="transform:scaleX(0.967);transform-origin:0 0;left:626.600px;top:257.800px">write</div>
<div class="cb" style="left:551.200px;top:247px;width:8px;height:8px;background:#f7f7f7;border-color:#bdbdbd"></div>
<div class="t" style="transform:scaleX(0.880);transform-origin:0 0;left:563.500px;top:245.300px;font-size:9.500px;color:#9b9b9b">DDD (API)</div>
<!-- play buttons -->
<div class="a" style="left:554.300px;top:278.400px;width:17.300px;height:14.400px;background:#d6dcd6;border:0.800px solid #8f958f;border-right-color:#f4f4f4;border-bottom-color:#f4f4f4"></div>
<div class="a" style="left:583px;top:278.800px;width:17.600px;height:14px;background:#cecece;border:0.800px solid #bdbdbd"></div>
<div class="a" style="left:612px;top:278.800px;width:17.600px;height:14px;background:#cfcfcf;border:0.800px solid #bdbdbd"></div>
<div class="a" style="left:640.200px;top:278.800px;width:17.600px;height:14px;background:#cfcfcf;border:0.800px solid #bdbdbd"></div>
<svg class="a" style="left:547px;top:275px" width="120" height="22" viewBox="547 275 120 22">
<path d="M557.300 280.600l12.200 5-12.200 5z" fill="#2ec236" stroke="#1a6a20" stroke-width="1" stroke-linejoin="round"/>
<path d="M597 280.600l-11.600 5 11.600 5z" fill="#858585" stroke="#4a4a4a" stroke-width="0.900" stroke-linejoin="round"/>
<path d="M613.800 281.600l4 4-4 4zM629 281.600l-4 4 4 4z" fill="#8c8c8c" stroke="#2c2c2c" stroke-width="0.900" stroke-linejoin="round"/>
<path d="M641.400 281.600l4.400 4-4.400 4zM656.200 281.600l-4.400 4 4.400 4z" fill="#8c8c8c" stroke="#2c2c2c" stroke-width="0.900" stroke-linejoin="round"/>
<path d="M648.700 281.200v8.800" stroke="#1c1c1c" stroke-width="1.800"/>
<text x="618.300" y="289.600" font-family="Liberation Sans,sans-serif" font-size="10.500" font-weight="bold" fill="#161616" textLength="6" lengthAdjust="spacingAndGlyphs">?</text>
</svg>
<!-- action radios -->
<div class="rd on" style="left:553.700px;top:304.800px;border-color:#5b87b8"></div><div class="t r12" style="transform:scaleX(0.918);transform-origin:0 0;left:566.200px;top:303px">Ignore</div>
<div class="rd" style="left:599.200px;top:304.800px"></div><div class="t r12" style="transform:scaleX(0.860);transform-origin:0 0;left:611.800px;top:303px">Erase</div>
<div class="rd" style="left:553.700px;top:319.800px"></div><div class="t r12" style="transform:scaleX(0.886);transform-origin:0 0;left:566.200px;top:318px">Remap</div>
<div class="rd" style="left:599.200px;top:319.800px"></div><div class="t r12" style="transform:scaleX(0.889);transform-origin:0 0;left:611.800px;top:318px">Refresh</div>
<!-- grid -->
<div class="cb" style="left:551.200px;top:343.300px;width:8.500px;height:8.500px;background:#f7f7f7;border-color:#a9a9a9"></div>
<div class="t" style="transform:scaleX(0.896);transform-origin:0 0;left:563.500px;top:341.600px;font-size:9.500px;font-weight:bold;color:#1d1d7e">Grid</div>
<div class="a" style="left:588.700px;top:339.500px;width:75.500px;height:13.800px;background:#020402"></div>
<div class="t" style="transform:scaleX(1.034);transform-origin:0 0;left:590.500px;top:339.500px;height:13.800px;line-height:14.400px;font-family:'Liberation Mono',monospace;font-size:14.500px;color:#3c3f3c">00:00:00</div>

<!-- table -->
<div class="a" style="left:462.500px;top:360px;width:203.500px;height:89px;background:#fff;border:1px solid #c4c4c4"></div>
<div class="a" style="left:463.500px;top:377.500px;width:201.500px;height:0.800px;background:#e3e3e3"></div>
<div class="a" style="left:533px;top:361px;width:0.800px;height:87px;background:#f0f0f0"></div>
<div class="a" style="left:575.700px;top:361px;width:0.800px;height:87px;background:#f0f0f0"></div>
<div class="a" style="left:646.400px;top:361px;width:0.800px;height:87px;background:#f0f0f0"></div>
<div class="a" style="left:463.500px;top:388.600px;width:201.500px;height:0.700px;background:#f5f5f5"></div>
<div class="a" style="left:463.500px;top:401.400px;width:201.500px;height:0.700px;background:#f5f5f5"></div>
<div class="a" style="left:463.500px;top:414.200px;width:201.500px;height:0.700px;background:#f5f5f5"></div>
<div class="a" style="left:463.500px;top:427px;width:201.500px;height:0.700px;background:#f5f5f5"></div>
<div class="a" style="left:463.500px;top:439.800px;width:201.500px;height:0.700px;background:#f5f5f5"></div>
<div class="t" style="transform:scaleX(0.897);transform-origin:0 0;left:467.900px;top:363.500px;font-size:9.500px;color:#222">Start LBA</div>
<div class="t" style="transform:scaleX(0.882);transform-origin:0 0;left:537.800px;top:363.500px;font-size:9.500px;color:#222">Block</div>
<div class="t" style="transform:scaleX(0.910);transform-origin:0 0;left:580px;top:363.500px;font-size:9.500px;color:#222">Comment</div>
<!-- right gray column -->
<div class="a" style="left:667.500px;top:85.500px;width:52.500px;height:366px;background:#a8a8a8;border-left:1.400px solid #ececec;border-right:1.500px solid #ececec"></div>
<div class="a" style="left:668px;top:451.500px;width:52px;height:4px;background:#e2e2e2"></div>
<div class="a" style="left:667.500px;top:455.500px;width:52.500px;height:60px;background:#a8a8a8;border-left:1.400px solid #ececec;border-right:1.500px solid #ececec"></div>
<div class="rd" style="left:677px;top:93.200px;background:#cfcfcf;border-color:#b9b9b9"></div><div class="a" style="left:679.600px;top:95.800px;width:2.800px;height:2.800px;border-radius:50%;background:#9a9a9a"></div>
<div class="t" style="transform:scaleX(0.775);transform-origin:0 0;left:690px;top:91.200px;font-size:10px;color:#c3c3c3">API</div>
<div class="rd" style="left:677px;top:108.800px;background:#d6d6d6;border-color:#bdbdbd"></div>
<div class="t" style="transform:scaleX(0.725);transform-origin:0 0;left:690px;top:106.800px;font-size:10px;color:#c3c3c3">PIO</div>
<div class="a" style="left:675.300px;top:128.400px;width:12.700px;height:6.400px;background:#8e8e8e;border:1px solid #3f3f3f"></div>
<div class="bt" style="left:674.500px;top:149.500px;width:40px;height:15px"></div>
<div class="t" style="transform:scaleX(0.919);transform-origin:50% 0;left:675px;top:151px;width:39.500px;text-align:center;font-size:10px;color:#111">Sleep</div>
<div class="bt" style="left:674.500px;top:193px;width:40px;height:15px"></div>
<div class="t" style="transform:scaleX(0.863);transform-origin:50% 0;left:675px;top:194.500px;width:39.500px;text-align:center;font-size:10px;color:#111">Recall</div>
<div class="a" style="left:674px;top:371.300px;width:18.500px;height:7.500px;background:#b4b4b4;border:1px solid #666;box-shadow:inset 0 0 0 0.600px #d0d0d0"></div>
<div class="a" style="left:696px;top:371.300px;width:18.500px;height:7.500px;background:#b4b4b4;border:1px solid #666;box-shadow:inset 0 0 0 0.600px #d0d0d0"></div>
<div class="bt" style="left:674px;top:420px;width:40.500px;height:14.700px"></div>
<div class="t" style="transform:scaleX(0.845);transform-origin:50% 0;left:674px;top:421.300px;width:40.500px;text-align:center;font-size:10px;color:#111">Passp</div>
<div class="cb" style="left:675.800px;top:462.500px;width:8px;height:8px"><svg width="9" height="9" viewBox="0 0 9 9"><path d="M2 4.500l1.800 1.800 2.700-4.200" fill="none" stroke="#2a3a8c" stroke-width="1.200"/></svg></div>
<div class="t" style="transform:scaleX(0.819);transform-origin:0 0;left:688px;top:460.500px;font-size:10px;color:#111">Sound</div>
<div class="cb" style="left:675.800px;top:477.700px;width:8px;height:8px"></div>
<div class="t" style="transform:scaleX(0.833);transform-origin:0 0;left:688px;top:475.700px;font-size:10px;color:#111">Hints</div>
<!-- log -->
<div class="a" style="left:2px;top:455px;width:666px;height:61px;background:#fff;border:1px solid #bcbcbc"></div>
<div class="a" style="left:3px;top:456px;width:653.500px;height:59px;background:repeating-linear-gradient(#f0fbf0 0,#f0fbf0 1.200px,#eaf6ea 1.200px,#eaf6ea 1.700px)"></div>
<div class="a" style="left:656.500px;top:456px;width:11px;height:59px;background:#f1f1f1"></div>
<svg class="a" style="left:656.500px;top:456px" width="11" height="59" viewBox="0 0 11 59"><path d="M3 8.300l2.500-2.800 2.500 2.800zM3 53.200l2.500 2.800 2.500-2.800z" fill="#444"/><rect x="1" y="40" width="9" height="11" rx="1" fill="#dcdcdc" stroke="#a9a9a9" stroke-width="0.700"/><path d="M3 44h5M3 45.700h5M3 47.400h5" stroke="#999" stroke-width="0.600"/></svg>
<div class="t lgx" style="transform:scaleX(0.931);transform-origin:0 0;left:7.500px;top:459.0px">18:46:52</div><div class="t lgx" style="transform:scaleX(0.920);transform-origin:0 0;left:55px;top:459.0px;color:#161616">Speed: Maximum 185 MB/s. Average 136 MB/s. Minimum 88 MB/s. 652 points.</div>
<div class="t lgx" style="transform:scaleX(0.931);transform-origin:0 0;left:7.500px;top:472.9px">19:37:19</div><div class="t lgx" style="transform:scaleX(0.904);transform-origin:0 0;left:55px;top:472.9px;color:#161616">Get drive passport... OK</div>
<div class="t lgx" style="transform:scaleX(0.931);transform-origin:0 0;left:7.500px;top:486.7px">19:37:19</div><div class="t lgx" style="transform:scaleX(0.899);transform-origin:0 0;left:55px;top:486.7px;color:#161616">Model: TOSHIBA DT01ACA050; Capacity: 976773168 LBAs; SN: 37O3P2ABS; FW: MS1OA750</div>
<div class="t lgx" style="transform:scaleX(0.931);transform-origin:0 0;left:7.500px;top:500.6px">19:37:19</div><div class="t lgx" style="transform:scaleX(0.889);transform-origin:0 0;left:55px;top:500.6px;color:#2a2a8c">USB device connected.</div>

<!-- watermark -->
<svg class="a" style="left:600px;top:470px;filter:drop-shadow(0 0 1.200px rgba(60,60,60,.350))" width="120" height="40" viewBox="600 470 120 40" opacity="0.740">
<circle cx="618.500" cy="492.200" r="6.800" fill="#fff"/><circle cx="633" cy="483.300" r="5.200" fill="#fff"/><circle cx="622.500" cy="480.600" r="2.400" fill="#fff"/><circle cx="634.600" cy="493.800" r="3.600" fill="#fff"/>
<text x="642" y="498.300" font-family="Liberation Sans,sans-serif" font-weight="bold" font-size="26.500" fill="#fff" textLength="66" lengthAdjust="spacingAndGlyphs">Avito</text>
</svg>
</body></html>
